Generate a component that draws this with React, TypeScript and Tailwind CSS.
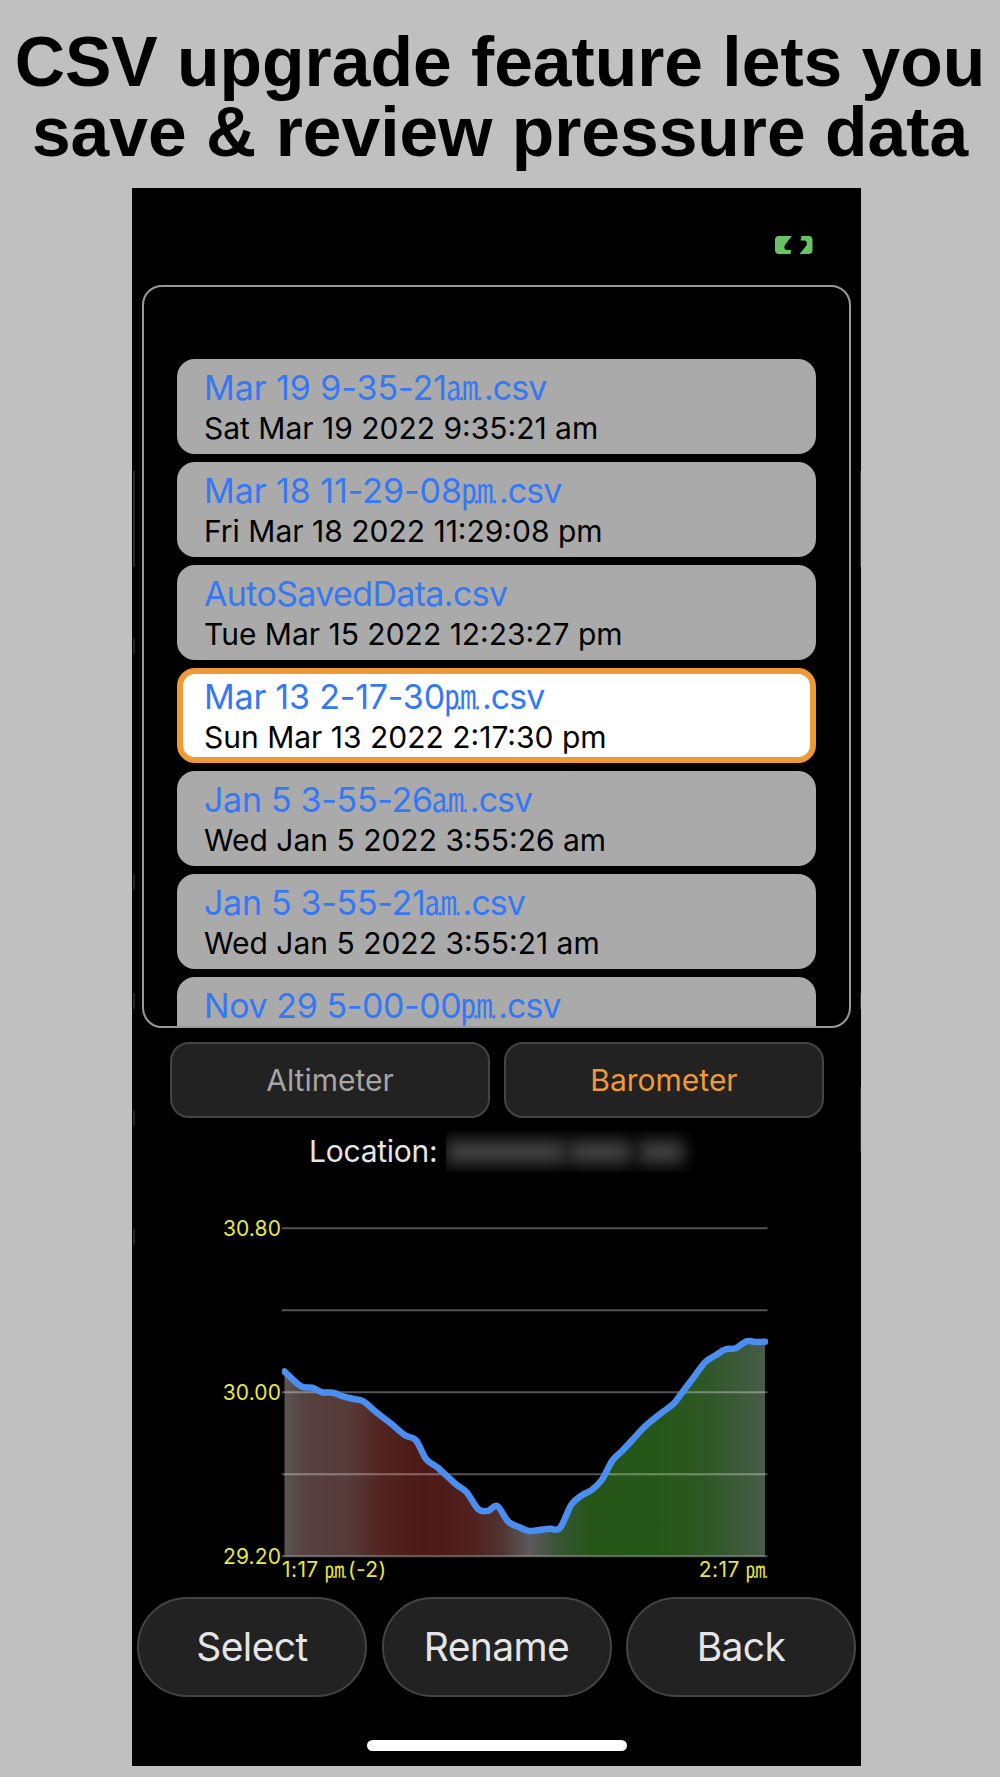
import React from 'react';
import { clsx } from 'clsx';

interface SavedFile {
  name: string;
  suffix: string;
  date: string;
  tracking: string;
  selected?: boolean;
}

// The app stamps file names with the single-glyph ㏂ / ㏘ characters
const files: SavedFile[] = [
  { name: 'Mar 19 9-35-21', suffix: '㏂', date: 'Sat Mar 19 2022 9:35:21 am', tracking: 'tracking-[-0.05px]' },
  { name: 'Mar 18 11-29-08', suffix: '㏘', date: 'Fri Mar 18 2022 11:29:08 pm', tracking: 'tracking-[-0.05px]' },
  { name: 'AutoSavedData', suffix: '', date: 'Tue Mar 15 2022 12:23:27 pm', tracking: 'tracking-[-0.65px]' },
  {
    name: 'Mar 13 2-17-30',
    suffix: '㏘',
    date: 'Sun Mar 13 2022 2:17:30 pm',
    tracking: 'tracking-[-0.2px]',
    selected: true,
  },
  { name: 'Jan 5 3-55-26', suffix: '㏂', date: 'Wed Jan 5 2022 3:55:26 am', tracking: 'tracking-[-0.3px]' },
  { name: 'Jan 5 3-55-21', suffix: '㏂', date: 'Wed Jan 5 2022 3:55:21 am', tracking: 'tracking-[-0.3px]' },
  { name: 'Nov 29 5-00-00', suffix: '㏘', date: 'Mon Nov 29 2021 5:00:00 pm', tracking: 'tracking-[-0.42px]' },
];

const CHART_TOP = 20.3;
const CHART_BOTTOM = 348.3;

// Pressure curve, in chart units
const points: [number, number][] = [
  [2.5, 163.5], [18.7, 178], [30.3, 179.7], [40.3, 184.3], [51, 184.7], [62, 188.7],
  [72, 191], [81.3, 193.3], [93.7, 203.7], [108.7, 215.3], [123, 227.3], [133.7, 232],
  [144.3, 251.3], [155.3, 259.3], [173.7, 276], [184.7, 284.3], [196.3, 301.3],
  [206.3, 302.7], [215.3, 298], [226.3, 313.7], [237, 319], [247, 323], [257, 322],
  [268, 320.7], [278, 320], [289.3, 296.7], [299.7, 287.3], [309.7, 282], [319.7, 272],
  [330.3, 252.7], [340.3, 242.7], [351, 231.3], [361.3, 220], [371.7, 211], [382, 203],
  [392, 195.3], [402, 182], [412.7, 168], [423.3, 154], [433.7, 147.3], [443.7, 141.3],
  [453.7, 140.3], [464.3, 133.3], [473.7, 134], [483, 133.7],
];

function smoothPath(pts: [number, number][]) {
  let d = `M${pts[0][0]},${pts[0][1]}`;
  for (let i = 0; i < pts.length - 1; i++) {
    const p0 = pts[i - 1] ?? pts[i];
    const p1 = pts[i];
    const p2 = pts[i + 1];
    const p3 = pts[i + 2] ?? p2;
    d += ` C${p1[0] + (p2[0] - p0[0]) / 6},${p1[1] + (p2[1] - p0[1]) / 6}`;
    d += ` ${p2[0] - (p3[0] - p1[0]) / 6},${p2[1] - (p3[1] - p1[1]) / 6} ${p2[0]},${p2[1]}`;
  }
  return d;
}

function BatteryIcon() {
  return (
    <svg className="h-[18px] w-[38px]" viewBox="0 0 38 18" fill="#65c466">
      <path d="M4 0H17L10.6 8Q9.2 10 9.3 11.500Q9.600 14 12 14H16.200L15.500 18H4Q0 18 0 14V4Q0 0 4 0Z" />
      <path d="M26.500 0H34Q37.500 0 37.500 4V14Q37.500 18 33.500 18H24.500L31 10Q32.200 8.200 32 6.800Q31.500 4.500 29.500 4.400H25.500Z" />
    </svg>
  );
}

function Meridiem({ children }: { children: React.ReactNode }) {
  return <span className="font-['Noto_Sans_CJK_JP',sans-serif] leading-[0] tracking-normal">{children}</span>;
}

function FileRow({ file }: { file: SavedFile }) {
  return (
    <div
      className={clsx(
        'h-[95px] shrink-0 rounded-[18px] border-[6px] pl-[21px] whitespace-nowrap',
        file.selected ? 'border-[#f09a37] bg-white' : 'border-[#aaaaaa] bg-[#aaaaaa]',
      )}
    >
      <p className={clsx('mt-[3px] h-10 text-[34px] leading-10 text-[#3478f6]', file.tracking)}>
        {file.name}
        {file.suffix && <Meridiem>{file.suffix}</Meridiem>}
        <span className={clsx(file.suffix && 'ml-[3px] tracking-[-0.95px]')}>.csv</span>
      </p>
      <p className="h-10 text-[30px] leading-10 text-black">{file.date}</p>
    </div>
  );
}

function PressureChart() {
  const line = smoothPath(points);
  const last = points[points.length - 1];

  return (
    <div className="ml-[82px] flex items-start">
      <div className="flex h-[363px] w-[68px] flex-col justify-between pt-[7px] pr-[1px] text-right text-[21px] leading-7 tracking-[0.1px] text-[#e6e64b]">
        <span>30.80</span>
        <span>30.00</span>
        <span>29.20</span>
      </div>
      <svg className="h-[368px] w-[488px]" viewBox="0 0 488 368">
        <defs>
          <linearGradient id="trend" gradientUnits="userSpaceOnUse" x1="2.5" y1="0" x2="483" y2="0">
            <stop offset="0" stopColor="#5c5555" />
            <stop offset="0.04" stopColor="#564240" />
            <stop offset="0.14" stopColor="#563a38" />
            <stop offset="0.2" stopColor="#522421" />
            <stop offset="0.29" stopColor="#4d1915" />
            <stop offset="0.39" stopColor="#50211e" />
            <stop offset="0.45" stopColor="#50332f" />
            <stop offset="0.51" stopColor="#5c5a5c" />
            <stop offset="0.57" stopColor="#385533" />
            <stop offset="0.64" stopColor="#255618" />
            <stop offset="0.78" stopColor="#255818" />
            <stop offset="0.88" stopColor="#2f5727" />
            <stop offset="1" stopColor="#485c48" />
          </linearGradient>
        </defs>
        <path d={`${line} L${last[0]},${CHART_BOTTOM} L2.5,${CHART_BOTTOM} Z`} fill="url(#trend)" />
        {[0, 1, 2, 3, 4].map((i) => {
          const y = CHART_TOP + ((CHART_BOTTOM - CHART_TOP) / 4) * i;
          return <line key={i} x1="0" x2="485.5" y1={y} y2={y} stroke="#ffffff" strokeOpacity="0.33" strokeWidth="2" />;
        })}
        <path d={line} fill="none" stroke="#4b8ef2" strokeWidth="6.5" strokeLinecap="round" strokeLinejoin="round" />
      </svg>
    </div>
  );
}

// Faint marks along the bezel
function EdgeMarks() {
  return (
    <>
      <span className="absolute top-[283px] left-px h-24 w-[1.5px] bg-[#2c2c2c]" />
      <span className="absolute top-[450px] left-px h-4 w-[1.5px] bg-[#222222]" />
      <span className="absolute top-[686px] left-px h-4 w-[1.5px] bg-[#222222]" />
      <span className="absolute top-[805px] left-px h-4 w-[1.5px] bg-[#222222]" />
      <span className="absolute top-[922px] left-px h-4 w-[1.5px] bg-[#222222]" />
      <span className="absolute top-[1041px] left-px h-4 w-[1.5px] bg-[#222222]" />
      <span className="absolute top-[283px] right-0 h-24 w-[1.5px] bg-[#3a3a3a]" />
      <span className="absolute top-[805px] right-0 h-4 w-[1.5px] bg-[#333333]" />
      <span className="absolute top-[899px] right-0 h-16 w-[1.5px] bg-[#2c2c2c]" />
    </>
  );
}

export default function App() {
  return (
    <div className="flex h-[1778px] w-[1000px] flex-col overflow-hidden border-b border-white bg-[#c0c0c0]">
      <h1 className="pt-[27px] text-center font-['Liberation_Sans',sans-serif] text-[69.6px] leading-[70px] font-bold whitespace-nowrap text-black">
        CSV upgrade feature lets you
        <br />
        save &amp; review pressure data
      </h1>

      <div className="relative mt-[21px] ml-[132px] flex h-[1578px] w-[729px] flex-col bg-black font-['Inter',sans-serif]">
        <EdgeMarks />
        <div className="flex h-[97px] items-start justify-end pt-12 pr-12">
          <BatteryIcon />
        </div>

        <div className="mx-[10px] flex h-[743px] flex-col gap-2 overflow-hidden rounded-[20px] border-2 border-[#999999] px-[33px] pt-[72px]">
          {files.map((file) => (
            <FileRow key={file.date} file={file} />
          ))}
        </div>

        <div className="mt-[14px] ml-[38px] flex gap-[14px] text-[30px]">
          <button className="h-[76px] w-[320px] rounded-[19px] border-2 border-[#444444] bg-[#222222] text-[#a5a5a5]">
            Altimeter
          </button>
          <button className="h-[76px] w-[320px] rounded-[19px] border-2 border-[#444444] bg-[#222222] text-[#f09a37]">
            Barometer
          </button>
        </div>

        <div className="mt-[13px] mb-[1px] ml-[177px] flex h-[41px] items-center">
          <span className="w-[137px] text-[30px] tracking-[-0.25px] whitespace-nowrap text-[#e5e5e5]">Location:</span>
          {/* Place name is redacted */}
          <div className="flex h-[41px] w-[250px] items-center gap-[3px] overflow-hidden">
            <span className="h-6 w-[120px] bg-[#434343] blur-[8px]" />
            <span className="h-6 w-[62px] bg-[#434343] blur-[8px]" />
            <span className="ml-1 h-6 w-[46px] bg-[#404040] blur-[8px]" />
          </div>
        </div>

        <div className="mt-[35px]">
          <PressureChart />
          <div className="-mt-[22px] ml-[150px] flex h-8 w-[485px] justify-between text-[21px] leading-8 tracking-[0.4px] whitespace-nowrap text-[#e6e64b]">
            <span>
              1:17 <Meridiem>㏘</Meridiem>
              <span className="ml-[2px]">(-2)</span>
            </span>
            <span>
              2:17 <Meridiem>㏘</Meridiem>
            </span>
          </div>
        </div>

        <div className="mt-[11px] ml-[5px] flex gap-[14.5px] text-[39px] tracking-[-0.6px] text-[#e5e5e5]">
          {['Select', 'Rename', 'Back'].map((label) => (
            <button key={label} className="h-[100px] w-[230px] rounded-full border-2 border-[#444444] bg-[#222222]">
              {label}
            </button>
          ))}
        </div>

        <div className="mt-[43px] ml-[234.5px] h-[11px] w-[260.5px] rounded-full bg-white" />
      </div>
    </div>
  );
}
